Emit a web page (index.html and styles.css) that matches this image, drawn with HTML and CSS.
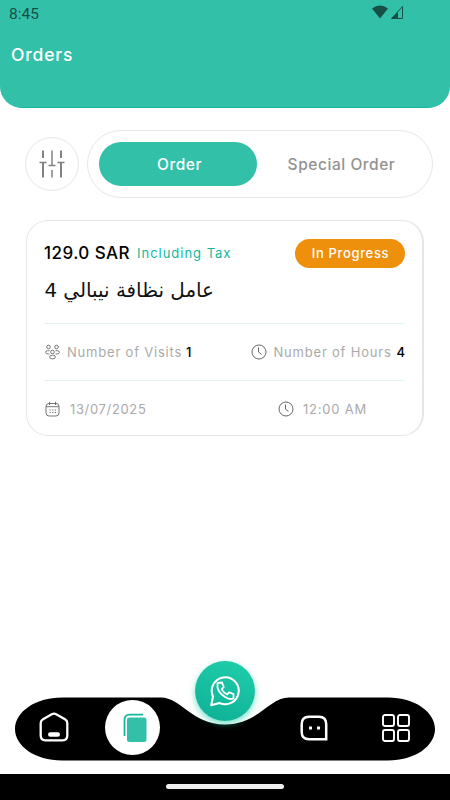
FILE: index.html
```html
<!DOCTYPE html>
<html lang="en">
<head>
<meta charset="utf-8">
<title>Orders</title>
<link rel="stylesheet" href="styles.css">
</head>
<body>
<header class="header">
  <div class="status">
    <span class="time">8:45</span>
    <svg class="signals" width="34" height="16" viewBox="0 0 34 16"><path d="M1 3.6Q9 -2.5 17 3.6L9 13.5Z" fill="#174f45"/><path d="M31.5 1.5V13.5H20.5Z" fill="none" stroke="#174f45"/><path d="M20 14L27 7V14Z" fill="#174f45"/></svg>
  </div>
  <h1 class="title">Orders</h1>
</header>
<main class="content">
  <div class="filters">
    <button class="filter">
      <svg width="26" height="28" viewBox="0 0 26 28" fill="none" stroke="#828282"><path stroke-width="2" d="M4 .5V8M4 13V27.5M22 .5V8M22 13V27.5"/><path stroke-width="1.5" d="M.5 12.5H7.5M18.5 12.5H25.5M9.500 15.500H16.500M13 .5V15M13 20V27.500"/></svg>
    </button>
    <div class="tabs">
      <button class="tab active"><span>Order</span></button>
      <button class="tab"><span>Special Order</span></button>
    </div>
  </div>
  <article class="card">
    <div class="price-row"><span class="price">129.0 SAR</span><span class="tax">Including Tax</span><span class="badge">In Progress</span></div>
    <div class="service" dir="rtl">عامل نظافة نيبالي 4</div>
    <div class="row visits">
      <svg width="16" height="16" viewBox="0 0 16 16" fill="none" stroke="#555" stroke-width=".8"><circle cx="3.500" cy="3" r="1.800"/><circle cx="11.500" cy="3" r="1.800"/><circle cx="7.500" cy="8" r="1.800"/><path d="M4.500 6.700H2.500Q.6 6.800.6 8.300T3 10H4.500M10.500 6.700H12.500Q14.400 6.800 14.400 8.300T12 10H10.500"/><ellipse cx="7.500" cy="13" rx="2.900" ry="1.900"/></svg>
      <span class="label">Number of Visits</span><b>1</b>
      <svg class="second" width="16" height="16" viewBox="0 0 16 16" fill="none" stroke="#555" stroke-width=".9"><circle cx="8" cy="8" r="7"/><path d="M7.500 3.500V8L10.500 10.500"/></svg>
      <span class="label hours">Number of Hours</span><b>4</b>
    </div>
    <div class="row date">
      <svg width="16" height="16" viewBox="0 0 16 16" fill="none" stroke="#666" stroke-width=".9"><rect x="1" y="2.500" width="13" height="12.500" rx="3"/><path d="M1 5.700H14M4.500 .8V4M10.500 .8V4"/><path stroke-width="1.200" stroke-dasharray="1.200 1.500" d="M4.500 9H11.500M4.500 11.500H11.500"/></svg>
      <span class="label day">13/07/2025</span>
      <svg class="second" width="16" height="16" viewBox="0 0 16 16" fill="none" stroke="#555" stroke-width=".9"><circle cx="8" cy="8" r="7"/><path d="M7.500 3.500V8L10.500 10.500"/></svg>
      <span class="label hour">12:00 AM</span>
    </div>
  </article>
</main>
<nav class="nav">
  <svg class="nav-shape" width="420" height="64" viewBox="0 0 420 64"><path d="M47 .5H146C166 .5 177 27.500 210 27.500S254 .5 274 .5H373C400 .5 420 15 420 32S400 63.500 373 63.500H47C20 63.500 0 49 0 32S20 .5 47 .5Z"/></svg>
  <a class="item home"><svg width="30" height="30" viewBox="0 0 30 30" fill="none" stroke="#fff" stroke-width="2.300"><path d="M12.800 2.200Q15 1 17.200 2.200L26 7.300Q28.300 8.600 28.300 11V23.500Q28.300 28.300 23.500 28.300H6.500Q1.700 28.300 1.700 23.500V11Q1.700 8.600 4 7.300Z"/><path stroke-width="4.600" stroke-linecap="round" d="M11.300 22.500H18.700"/></svg></a>
  <a class="item orders"><svg width="24" height="30" viewBox="0 0 24 30"><rect x="4" y="4.500" width="19.500" height="24.500" rx="2.500" fill="#33c0a9"/><path d="M1.500 23V7Q1.500 1.700 6.500 1.700H20" fill="none" stroke="#12b89d" stroke-width="1.800"/></svg></a>
  <a class="item whatsapp"><svg width="30" height="31" viewBox="0 0 30 31" fill="none" stroke="#fff" stroke-width="2"><path stroke-linejoin="round" d="M3 20.500A13.500 13.500 0 1 1 9.500 27L1.200 29.200Z"/><path stroke-width="1.800" stroke-linejoin="round" d="M7.500 7L12 6.500L13.800 11L11.700 13.200Q13.500 17 17.300 18.500L19 16.300L23.500 18V22.500Q20 24 15.500 21.200Q9 17.500 7.500 11.500Z"/></svg></a>
  <a class="item chat"><svg width="28" height="26" viewBox="0 0 28 26"><path d="M9 1.700H19Q26.200 1.700 26.200 9V24.200H9Q1.700 24.200 1.700 17V9Q1.700 1.700 9 1.700Z" fill="none" stroke="#fff" stroke-width="2.500"/><path fill="#fff" d="M9 11.500h3v3h-3zM17 11.500h3v3h-3z"/></svg></a>
  <a class="item more"><svg width="28" height="28" viewBox="0 0 28 28" fill="none" stroke="#fff" stroke-width="1.900"><rect x="1" y="1" width="11" height="11" rx="2"/><rect x="16" y="1" width="11" height="11" rx="2"/><rect x="1" y="16" width="11" height="11" rx="2"/><rect x="16" y="16" width="11" height="11" rx="2"/></svg></a>
</nav>
<footer class="system"><span class="handle"></span></footer>
</body>
</html>
```
FILE: styles.css
```css
* { box-sizing: border-box; }
body { margin: 0; width: 450px; height: 800px; display: flex; flex-direction: column; background: #fff; font-family: Inter, "Liberation Sans", sans-serif; overflow: hidden; }
svg { display: block; flex: none; }
button { border: 0; background: none; padding: 0; font: inherit; }
span, b { white-space: nowrap; }
.header { height: 108px; background: #33c0a9; border-bottom: 1px solid #12b89d; border-radius: 0 0 22px 22px; }
.status { height: 28px; padding: 0 45px 0 9px; display: flex; justify-content: space-between; align-items: center; }
.time { font: 15.5px Roboto, sans-serif; color: #174f45; }
.signals { margin-top: -2px; }
.title { margin: 16px 0 0 11px; font-size: 17.5px; line-height: 22px; font-weight: 500; letter-spacing: .85px; color: #fff; }
.content { flex: 1; padding: 22px 17px 0 25px; }
.filters { display: flex; align-items: center; gap: 8px; }
.filter { width: 54px; height: 54px; border: 1px solid #e6e6e6; border-radius: 50%; display: grid; place-items: center; }
.tabs { width: 346px; height: 68px; padding: 0 11px; border: 1px solid #e6e6e6; border-radius: 34px; display: flex; align-items: center; }
.tab { flex: none; width: 158px; height: 44px; border-radius: 22px; font-size: 15.5px; letter-spacing: .55px; padding-left: 3px; font-weight: 450; color: #929292; }
.tab + .tab { width: 166px; }
.active { background: #33c0a9; color: #fff; font-weight: 500; }
.card { margin: 22px 0 0 1px; width: 398px; height: 216px; border: 1px solid #e6e6e6; border-width: 1px 2px 1px 1px; border-radius: 22px; padding: 18px 17px 0; }
.price-row { display: flex; align-items: center; height: 28px; }
.price { width: 93px; font-size: 17px; font-weight: 550; letter-spacing: .45px; color: #000; }
.tax { font-size: 13px; letter-spacing: .98px; color: #12b89d; }
.badge { margin-left: auto; width: 110px; height: 29px; border-radius: 15px; background: #ef900d; color: #fff; font-size: 13px; line-height: 28px; text-align: center; font-weight: 500; letter-spacing: .65px; padding-left: 1px; }
.service { height: 56px; width: 170px; padding-top: 12px; font: 19.9px/24px "DejaVu Sans", sans-serif; color: #111; white-space: nowrap; text-align: right; direction: rtl; text-align: start; }
.row { height: 57px; border-top: 1px solid #dff5f1; padding-left: 1px; display: flex; align-items: center; }
.label { font-size: 13px; letter-spacing: .8px; color: #aaa; margin-left: 6px; width: 119px; }
.row b { font-size: 13px; font-weight: 550; }
.second { margin-left: auto; }
.hours { width: 123px; margin-left: 6px; }
.day { margin-left: 9px; letter-spacing: .65px; }
.hour { margin-left: 9px; width: 102px; }
.nav { position: relative; height: 112px; padding: 47px 15px 0; display: flex; }
.nav-shape { margin-top: -12px; }
.item { position: absolute; display: grid; place-items: center; }
.home { left: 39px; top: 50px; }
.orders { left: 105px; top: 38px; width: 55px; height: 55px; border-radius: 50%; background: #fff; padding-left: 5px; }
.whatsapp { left: 195px; top: -1px; width: 60px; height: 60px; border-radius: 50%; background: linear-gradient(20deg, #0eaf94, #20cfac); box-shadow: 0 3px 6px #20cfac99; }
.chat { left: 300px; top: 53px; }
.more { left: 382px; top: 52px; }
.system { height: 26px; background: #000; display: flex; justify-content: center; padding-top: 10px; }
.handle { width: 118px; height: 5px; border-radius: 3px; background: #eee; }
```
